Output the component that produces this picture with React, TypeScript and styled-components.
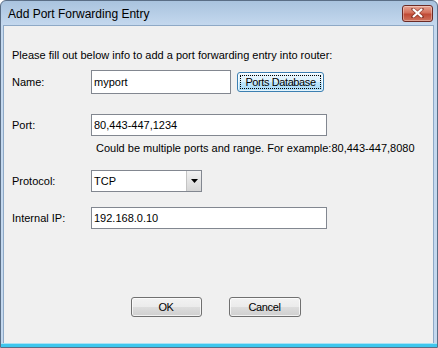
import styled, { createGlobalStyle } from "styled-components";

const Global = createGlobalStyle`
  html, body {
    margin: 0;
    padding: 0;
    background: #ffffff;
  }
  body {
    font-family: "Liberation Sans", Arial, sans-serif;
  }
`;

const Frame = styled.div`
  width: 438px;
  height: 348px;
  box-sizing: border-box;
  display: flex;
  flex-direction: column;
  border: 1px solid #5a6e86;
  border-radius: 6px 6px 0 0;
  background: linear-gradient(to bottom, #a9c3de 0px, #c4d8ee 24px, #c4d8ee 100%);
  overflow: hidden;
`;

const TitleBar = styled.div`
  height: 24px;
  flex: none;
  display: flex;
  align-items: center;
  justify-content: space-between;
  padding: 0 4px 0 7px;
`;

const Title = styled.span`
  font-family: "Liberation Sans", Arial, sans-serif;
  font-size: 12px;
  color: #000;
  padding-top: 2px;
`;

const CloseButton = styled.div`
  width: 29px;
  height: 15px;
  border: 1px solid #6b2a25;
  border-radius: 3px;
  background: linear-gradient(to bottom, #e8a493 0%, #d4705b 45%, #c04a35 55%, #d0735d 100%);
  box-shadow: inset 0 0 0 1px rgba(255, 255, 255, 0.35);
  display: flex;
  align-items: center;
  justify-content: center;
`;

const Client = styled.div`
  flex: 1;
  margin: 0 3px 0 2px;
  background: #f0f0f0;
  border: 1px solid #8ea9c6;
  border-bottom: none;
  display: flex;
  flex-direction: column;
  padding: 23px 0 0 8px;
  font-size: 11px;
  color: #000;
`;

const BottomEdge = styled.div`
  height: 3px;
  flex: none;
  background: #3ec7ee;
  border-top: 1px solid #a9e2f4;
`;

const Intro = styled.div`
  line-height: 13px;
  height: 13px;
`;

const Row = styled.div<{ $top: number; $h: number }>`
  display: flex;
  align-items: center;
  margin-top: ${(p) => p.$top}px;
  height: ${(p) => p.$h}px;
`;

const Label = styled.div`
  width: 79px;
  flex: none;
`;

const TextBox = styled.div<{ $w: number; $h: number }>`
  width: ${(p) => p.$w}px;
  height: ${(p) => p.$h}px;
  box-sizing: border-box;
  border: 1px solid #828790;
  background: #fff;
  display: flex;
  align-items: center;
  padding-left: 2px;
`;

const Hint = styled.div`
  margin-top: 6px;
  margin-left: 84px;
  line-height: 13px;
`;

const Select = styled.div`
  width: 111px;
  height: 22px;
  box-sizing: border-box;
  border: 1px solid #828790;
  background: #fff;
  display: flex;
  align-items: stretch;
`;

const SelectValue = styled.div`
  flex: 1;
  display: flex;
  align-items: center;
  padding-left: 2px;
`;

const SelectArrow = styled.div`
  width: 14px;
  border-left: 1px solid #c4c4c4;
  background: linear-gradient(to bottom, #f2f2f2 0%, #e4e4e4 50%, #d6d6d6 100%);
  display: flex;
  align-items: center;
  justify-content: center;
`;

const Button = styled.div<{ $focused?: boolean; $w: number }>`
  width: ${(p) => p.$w}px;
  height: 20px;
  box-sizing: border-box;
  border: 1px solid ${(p) => (p.$focused ? "#3c7fb1" : "#707070")};
  border-radius: 3px;
  background: ${(p) =>
    p.$focused
      ? "linear-gradient(to bottom, #eaf6fd 0%, #d9f0fc 50%, #bee6fd 51%, #a7d9f5 100%)"
      : "linear-gradient(to bottom, #f2f2f2 0%, #ebebeb 50%, #dddddd 51%, #cfcfcf 100%)"};
  box-shadow: inset 0 0 0 1px rgba(255, 255, 255, 0.7);
  display: flex;
  align-items: center;
  justify-content: center;
  letter-spacing: -0.4px;
  position: relative;
`;

const FocusRing = styled.span`
  position: absolute;
  inset: 2px;
  border: 1px dotted #000;
`;

const SideButton = styled.div`
  margin-left: 6px;
`;

const Footer = styled.div`
  margin-top: 68px;
  display: flex;
  justify-content: center;
  gap: 27px;
  padding-right: 14px;
`;

export default function App() {
  return (
    <>
      <Global />
      <Frame>
        <TitleBar>
          <Title>Add Port Forwarding Entry</Title>
          <CloseButton>
            <svg width="13" height="10" viewBox="0 0 13 10">
              <path
                d="M2 1 L11 9 M11 1 L2 9"
                stroke="#5b1d17"
                strokeWidth="3.6"
                strokeLinecap="square"
                opacity="0.5"
              />
              <path d="M2 1 L11 9 M11 1 L2 9" stroke="#ffffff" strokeWidth="2.2" />
            </svg>
          </CloseButton>
        </TitleBar>
        <Client>
          <Intro>Please fill out below info to add a port forwarding entry into router:</Intro>
          <Row $top={8} $h={24}>
            <Label>Name:</Label>
            <TextBox $w={140} $h={24}>myport</TextBox>
            <SideButton>
              <Button $focused $w={87}>
                <FocusRing />
                Ports Database
              </Button>
            </SideButton>
          </Row>
          <Row $top={20} $h={22}>
            <Label>Port:</Label>
            <TextBox $w={236} $h={22}>80,443-447,1234</TextBox>
          </Row>
          <Hint>Could be multiple ports and range. For example:80,443-447,8080</Hint>
          <Row $top={15} $h={22}>
            <Label>Protocol:</Label>
            <Select>
              <SelectValue>TCP</SelectValue>
              <SelectArrow>
                <svg width="7" height="4" viewBox="0 0 7 4">
                  <path d="M0 0 H7 L3.5 4 Z" fill="#000" />
                </svg>
              </SelectArrow>
            </Select>
          </Row>
          <Row $top={15} $h={22}>
            <Label>Internal IP:</Label>
            <TextBox $w={236} $h={22}>192.168.0.10</TextBox>
          </Row>
          <Footer>
            <Button $w={71}>OK</Button>
            <Button $w={72}>Cancel</Button>
          </Footer>
        </Client>
        <BottomEdge />
      </Frame>
    </>
  );
}
